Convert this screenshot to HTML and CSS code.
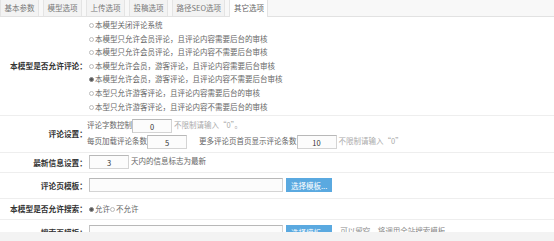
FILE: index.html
```html
<!DOCTYPE html>
<html lang="zh-CN">
<head>
    <meta charset="UTF-8">
    <title>其它选项</title>
    <link rel="stylesheet" href="styles.css">
</head>
<body>
    <div class="tabs">
        <span class="tab">基本参数</span>
        <span class="tab">模型选项</span>
        <span class="tab">上传选项</span>
        <span class="tab">投稿选项</span>
        <span class="tab">路径SEO选项</span>
        <span class="tab active">其它选项</span>
    </div>

    <div class="form">
        <div class="row row-comment">
            <div class="label">本模型是否允许评论：</div>
            <div class="field options">
                <label class="opt"><span class="radio"></span>本模型关闭评论系统</label>
                <label class="opt"><span class="radio"></span>本模型只允许会员评论，且评论内容需要后台的审核</label>
                <label class="opt"><span class="radio"></span>本模型只允许会员评论，且评论内容不需要后台审核</label>
                <label class="opt"><span class="radio"></span>本模型允许会员，游客评论，且评论内容需要后台审核</label>
                <label class="opt"><span class="radio checked"></span>本模型允许会员，游客评论，且评论内容不需要后台审核</label>
                <label class="opt"><span class="radio"></span>本型只允许游客评论，且评论内容需要后台的审核</label>
                <label class="opt"><span class="radio"></span>本型只允许游客评论，且评论内容不需要后台的审核</label>
            </div>
        </div>

        <div class="row row-settings">
            <div class="label">评论设置：</div>
            <div class="field">
                <div class="line">评论字数控制<input class="num" type="text" value="0"><span class="hint">不限制请输入“0”。</span></div>
                <div class="line">每页加载评论条数<input class="num" type="text" value="5"><span class="gap">更多评论页首页显示评论条数</span><input class="num" type="text" value="10"><span class="hint">不限制请输入“0”</span></div>
            </div>
        </div>

        <div class="row row-small">
            <div class="label">最新信息设置：</div>
            <div class="field">
                <input class="num" type="text" value="3"><span class="after">天内的信息标志为最新</span>
            </div>
        </div>

        <div class="row row-tpl">
            <div class="label">评论页模板：</div>
            <div class="field">
                <input class="wide" type="text" value=""><button class="pick-btn">选择模板...</button>
            </div>
        </div>

        <div class="row row-radio">
            <div class="label">本模型是否允许搜索：</div>
            <div class="field">
                <label class="inline-opt"><span class="radio checked"></span>允许</label><label class="inline-opt"><span class="radio"></span>不允许</label>
            </div>
        </div>

        <div class="row row-tpl">
            <div class="label">搜索页模板：</div>
            <div class="field">
                <input class="wide" type="text" value=""><button class="pick-btn">选择模板...</button><span class="note">可以留空，将调用全站搜索模板。</span>
            </div>
        </div>
    </div>

    <div class="bottom-bar"></div>
</body>
</html>
```

FILE: styles.css
```css
body {
    margin: 0;
    font-family: "Noto Sans CJK SC", "Noto Sans", sans-serif;
    font-size: 7.5px;
    color: #666;
    background-color: #fff;
}

.tabs {
    display: flex;
    gap: 4px;
    height: 16px;
    background-color: #f8f8f8;
    border-bottom: 1px solid #e2e2e2;
}

.tab {
    height: 16px;
    line-height: 16px;
    padding: 0 3.5px;
    background-color: #f3f3f3;
    border: 1px solid #e4e4e4;
    border-top: none;
    border-bottom: none;
    color: #777;
}

.tab.active {
    background-color: #fff;
    height: 17px;
    color: #666;
}

.row {
    display: flex;
    align-items: center;
    border-bottom: 1px solid #eee;
}

.label {
    flex: none;
    width: 87px;
    text-align: right;
    font-weight: bold;
    color: #333;
    font-size: 7.7px;
}

.field {
    padding-left: 2px;
}

.row-comment {
    padding: 1px 0 2px;
}

.opt {
    display: block;
    line-height: 13.6px;
}

.radio {
    display: inline-block;
    box-sizing: border-box;
    width: 5px;
    height: 5px;
    margin-right: 1px;
    border: 1px solid #bbb;
    border-radius: 50%;
    vertical-align: 0;
}

.radio.checked {
    border-color: #888;
    background-color: #555;
}

.row-settings {
    padding: 1px 0 3px;
}

.row-settings .field {
    padding-left: 0;
}

.line {
    height: 16px;
    line-height: 16px;
}

input.num,
input.wide {
    box-sizing: border-box;
    height: 14px;
    padding: 0;
    border: 1px solid #d4d4d4;
    border-top-color: #b8b8b8;
    border-left-color: #c4c4c4;
    background-color: #fcfcfc;
    font-family: inherit;
    font-size: 7.5px;
    color: #333;
    vertical-align: middle;
}

input.num {
    width: 40px;
    text-align: center;
}

input.wide {
    width: 194px;
}

.hint {
    margin-left: 2px;
    color: #aaa;
}

.gap {
    margin-left: 12px;
}

.row-small {
    padding: 2px 0 3px;
}

.after {
    margin-left: 2px;
}

.row-tpl {
    padding: 5px 0 6px;
}

.pick-btn {
    height: 14px;
    margin-left: 3px;
    padding: 0 5px;
    border: none;
    background-color: #5aa9e0;
    color: #fff;
    font-family: inherit;
    font-size: 7.5px;
    vertical-align: middle;
}

.note {
    margin-left: 8px;
    color: #888;
}

.row-radio {
    padding: 3px 0 4px;
}

.inline-opt {
    line-height: 13px;
}

.bottom-bar {
    position: fixed;
    left: 0;
    right: 0;
    bottom: 0;
    height: 9px;
    background-color: #f3f3f3;
}
```
